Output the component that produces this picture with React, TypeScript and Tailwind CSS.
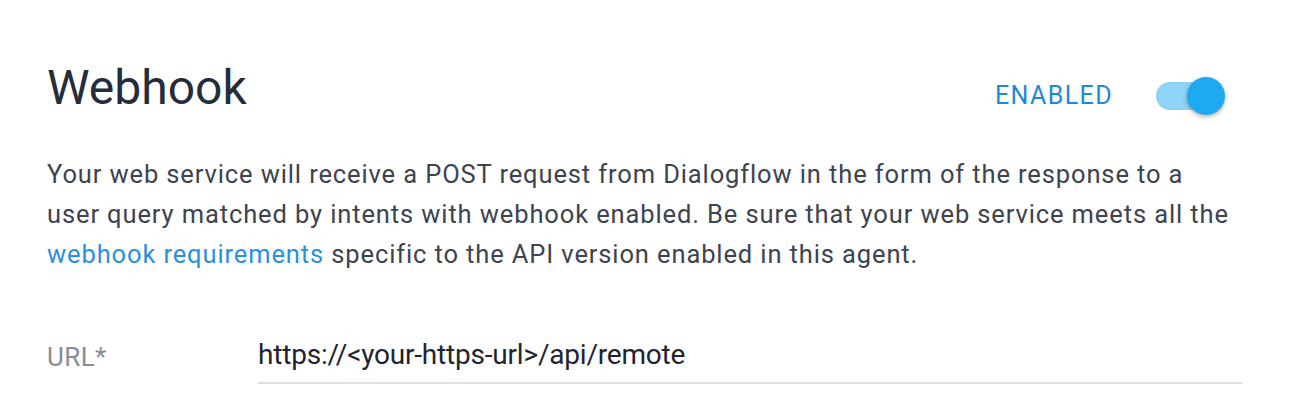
import React, { useState } from "react";

const Toggle: React.FC<{ on: boolean; onChange: () => void }> = ({ on, onChange }) => (
  <button onClick={onChange} className="relative h-[40px] w-[70px] flex items-center">
    <span className={`block h-[28px] w-[54px] rounded-full ${on ? "bg-[#8fd3f8]" : "bg-gray-300"}`} />
    <span
      className={`absolute top-[1px] h-[38px] w-[38px] rounded-full shadow-[0_2px_4px_rgba(0,0,0,0.3)] ${
        on ? "left-[31px] bg-[#1fa9f1]" : "left-0 bg-white"
      }`}
    />
  </button>
);

export default function App() {
  const [enabled, setEnabled] = useState(true);
  const [url, setUrl] = useState("https://<your-https-url>/api/remote");

  return (
    <div className="w-[1290px] h-[410px] bg-white font-['Roboto',sans-serif] pl-[47px] pr-[48px] pt-[58px]">
      {/* 헤더 */}
      <div className="flex items-center justify-between">
        <h1 className="text-[48px] leading-[60px] text-[#252d3c] font-normal">Webhook</h1>
        <div className="flex items-center gap-[43px] pt-[16px] pr-[16px]">
          <span className="text-[25px] text-[#1e88d8] tracking-[1.4px]">ENABLED</span>
          <Toggle on={enabled} onChange={() => setEnabled(!enabled)} />
        </div>
      </div>

      <p className="mt-[36px] text-[25.5px] leading-[40px] text-[#3d434f] tracking-[0.88px] whitespace-nowrap">
        Your web service will receive a POST request from Dialogflow in the form of the response to a
        <br />
        user query matched by intents with webhook enabled. Be sure that your web service meets all the
        <br />
        <a href="#" className="text-[#2b8fe0]">webhook requirements</a> specific to the API version enabled in this
        agent.
      </p>

      <div className="mt-[60px] flex items-start">
        <label className="w-[211px] pt-[4px] text-[26px] text-[#868d99] tracking-[0.4px]">URL*</label>
        <input
          value={url}
          onChange={(e) => setUrl(e.target.value)}
          className="w-[984px] border-b-2 border-[#dedede] pb-[6px] text-[28px] text-[#1f2430] outline-none tracking-[-0.2px]"
        />
      </div>
    </div>
  );
}
